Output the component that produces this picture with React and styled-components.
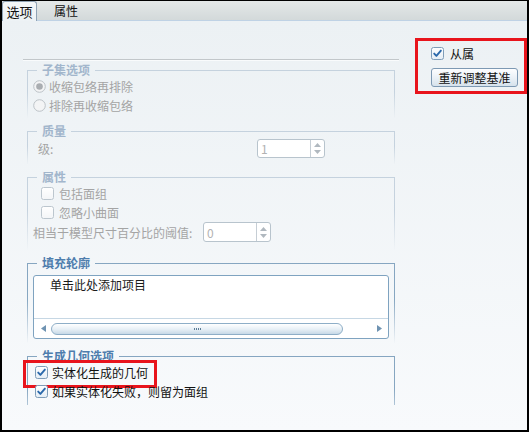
import React from "react";
import styled, { createGlobalStyle } from "styled-components";

const GlobalStyle = createGlobalStyle`
  html, body { margin: 0; padding: 0; background: #fff; }
  body {
    font-family: "Noto Sans CJK SC", "DejaVu Sans", sans-serif;
    font-size: 12px;
    color: #111;
  }
`;

const Frame = styled.div`
  width: 529px;
  height: 432px;
  box-sizing: border-box;
  border: 2px solid #000;
  border-top-width: 1px;
  display: flex;
  flex-direction: column;
  overflow: hidden;
`;

const TabBar = styled.div`
  height: 20px;
  box-sizing: border-box;
  display: flex;
  align-items: flex-end;
  background: linear-gradient(#e4e8e8, #d3d9da);
  border-bottom: 1px solid #bfd2e5;
`;

const Tab = styled.div`
  height: ${(p) => (p.$active ? "20px" : "19px")};
  box-sizing: border-box;
  margin-bottom: ${(p) => (p.$active ? "-1px" : "0")};
  padding: 0 ${(p) => (p.$active ? "3px" : "17px")};
  display: flex;
  align-items: center;
  font-size: ${(p) => (p.$active ? "13px" : "12px")};
  line-height: 1;
  color: #111;
  ${(p) =>
    p.$active &&
    `
    width: 35px;
    justify-content: center;
    background: linear-gradient(#f3f6f8, #edf2f5);
    border: 1px solid #90a3b5;
    border-bottom: none;
    border-radius: 3px 3px 0 0;
  `}
`;

const Content = styled.div`
  flex: 1;
  display: flex;
  align-items: flex-start;
  padding: 17px 0 0 21px;
  background: linear-gradient(#ecf1f4, #f8fafc);
`;

const Panel = styled.div`
  margin-top: 21px;
  width: 376px;
  height: 346px;
  box-sizing: border-box;
  border-top: 1px solid #c2c7ca;
  box-shadow: inset 0 1px 0 #f9fbfc;
  padding: 3px 0 0 4px;
  display: flex;
  flex-direction: column;
  gap: 6px;
  overflow: hidden;
`;

const Group = styled.fieldset`
  margin: 0;
  padding: 0;
  min-width: 0;
  width: 368px;
  height: ${(p) => p.$h}px;
  box-sizing: border-box;
  flex: none;
  border: 1px solid transparent;
  border-bottom: none;
  border-image: linear-gradient(
      to bottom,
      ${(p) => (p.$on ? "#86a6c1" : "#c5d2de")} 0,
      ${(p) => (p.$on ? "#86a6c1" : "#c5d2de")} 45%,
      rgba(255, 255, 255, 0) 100%
    )
    1;
`;

const Legend = styled.legend`
  margin-left: 9px;
  padding: 0 5px;
  font-weight: bold;
  line-height: 14px;
  color: ${(p) => (p.$on ? "#4e7dad" : "#a2b6cc")};
`;

const Row = styled.div`
  position: relative;
  display: flex;
  align-items: center;
  height: ${(p) => p.$h || 19}px;
  padding-left: ${(p) => p.$indent || 0}px;
  gap: ${(p) => p.$gap ?? 4}px;
  color: ${(p) => (p.$off ? "#a4a4a4" : "#111")};
  white-space: nowrap;
`;

const Label = styled.span`
  width: ${(p) => (p.$w ? `${p.$w}px` : "auto")};
  flex: none;
`;

const Highlight = styled.span`
  position: absolute;
  left: -5px;
  top: -3px;
  width: 134px;
  height: 28px;
  border: 3px solid #e8141c;
  box-sizing: border-box;
  pointer-events: none;
`;

const Spin = styled.div`
  width: 68px;
  height: ${(p) => p.$h || 19}px;
  box-sizing: border-box;
  display: flex;
  border: 1px solid #b8c4cd;
  border-radius: 3px;
  background: #fff;
`;

const SpinValue = styled.div`
  flex: 1;
  padding-left: 3px;
  display: flex;
  align-items: center;
  color: #b2b2b2;
`;

const SpinButtons = styled.div`
  width: 13px;
  border-left: 1px solid #c6ced5;
  display: flex;
  flex-direction: column;
  align-items: center;
  justify-content: center;
  gap: 3px;
`;

const Inset = styled.div`
  padding: 5px 5px 0;
`;

const ListBox = styled.div`
  height: 64px;
  box-sizing: border-box;
  border: 1px solid #7fa3c0;
  border-radius: 3px;
  background: #fff;
  display: flex;
  flex-direction: column;
`;

const ListBody = styled.div`
  flex: 1;
  padding: 1px 0 0 16px;
  line-height: 16px;
  color: #1a1a1a;
`;

const HScroll = styled.div`
  height: 20px;
  box-sizing: border-box;
  border-top: 1px solid #c6d7e4;
  display: flex;
  align-items: center;
  padding: 0 6px 0 7px;
`;

const Thumb = styled.div`
  margin-left: 5px;
  width: 292px;
  height: 12px;
  box-sizing: border-box;
  border: 1px solid #8eaec7;
  border-radius: 6px;
  background: linear-gradient(#ffffff, #e8f0f6 50%, #c7d9e7);
  display: flex;
  align-items: center;
  justify-content: center;
`;

const Grip = styled.span`
  width: 7px;
  height: 2px;
  background: repeating-linear-gradient(to right, #5d7d97 0 1px, transparent 1px 2px);
`;

const Spacer = styled.div`
  flex: 1;
`;

const Side = styled.div`
  margin-left: 16px;
  width: 112px;
  height: 56px;
  box-sizing: border-box;
  border: 3px solid #e8141c;
  padding: 5px 0 0 13px;
  display: flex;
  flex-direction: column;
  gap: 8px;
`;

const Button = styled.button`
  width: 87px;
  height: 19px;
  padding: 0;
  box-sizing: border-box;
  border: 1px solid #7d99b3;
  border-radius: 3px;
  background: linear-gradient(#fdfeff, #e9f0f6 55%, #d6e2ec);
  font-family: inherit;
  font-size: 12px;
  line-height: 1;
  color: #111;
`;

const Box = ({ on = true, checked }) => (
  <svg width="13" height="13" viewBox="0 0 13 13" style={{ flex: "none" }}>
    <defs>
      <linearGradient id={`cb${on ? 1 : 0}`} x1="0" y1="0" x2="0" y2="1">
        <stop offset="0" stopColor="#ffffff" />
        <stop offset="1" stopColor={on ? "#e4edf5" : "#f3f5f7"} />
      </linearGradient>
    </defs>
    <rect x="0.5" y="0.5" width="12" height="12" rx="2" fill={`url(#cb${on ? 1 : 0})`} stroke={on ? "#7f9db8" : "#bcc6ce"} />
    {checked && (
      <path d="M3.2 6.6 L5.4 8.9 L9.9 3.6" fill="none" stroke="#2b69ab" strokeWidth="1.9" strokeLinecap="round" strokeLinejoin="round" />
    )}
  </svg>
);

const Radio = ({ checked }) => (
  <svg width="13" height="13" viewBox="0 0 13 13" style={{ flex: "none" }}>
    <circle cx="6.5" cy="6.5" r="5.8" fill="#f3f4f5" stroke="#bcc2c7" />
    {checked && <circle cx="6.5" cy="6.5" r="3.3" fill="#a9adb1" />}
  </svg>
);

const Arrow = ({ dir }) => (
  <svg width="5" height="7" viewBox="0 0 5 7" style={{ flex: "none" }}>
    <path d={dir === "left" ? "M5 0 L0 3.5 L5 7 Z" : "M0 0 L5 3.5 L0 7 Z"} fill="#6f93b2" />
  </svg>
);

const Tri = ({ up }) => (
  <svg width="7" height="4" viewBox="0 0 7 4">
    <path d={up ? "M0 4 L3.5 0 L7 4 Z" : "M0 0 L3.5 4 L7 0 Z"} fill="#b0b8bf" />
  </svg>
);

const SpinBox = ({ value, h }) => (
  <Spin $h={h}>
    <SpinValue>{value}</SpinValue>
    <SpinButtons>
      <Tri up />
      <Tri />
    </SpinButtons>
  </Spin>
);

export default function App() {
  return (
    <>
      <GlobalStyle />
      <Frame>
        <TabBar>
          <Tab $active>选项</Tab>
          <Tab>属性</Tab>
        </TabBar>
        <Content>
          <Panel>
            <Group $h={55}>
              <Legend>子集选项</Legend>
              <Row $off $indent={5} $gap={3}>
                <Radio checked />
                收缩包络再排除
              </Row>
              <Row $off $indent={5} $gap={3}>
                <Radio />
                排除再收缩包络
              </Row>
            </Group>

            <Group $h={40}>
              <Legend>质量</Legend>
              <Row $off $indent={10} $h={21} $gap={0}>
                <Label $w={219}>级:</Label>
                <SpinBox value="1" />
              </Row>
            </Group>

            <Group $h={80}>
              <Legend>属性</Legend>
              <Row $off $indent={13} $gap={5}>
                <Box on={false} />
                包括面组
              </Row>
              <Row $off $indent={13} $gap={5} $h={18}>
                <Box on={false} />
                忽略小曲面
              </Row>
              <Row $off $indent={5} $h={22} $gap={6}>
                <Label $w={164}>相当于模型尺寸百分比的阈值:</Label>
                <SpinBox value="0" h={20} />
              </Row>
            </Group>

            <Group $h={87} $on>
              <Legend $on>填充轮廓</Legend>
              <Inset>
                <ListBox>
                  <ListBody>单击此处添加项目</ListBody>
                  <HScroll>
                    <Arrow dir="left" />
                    <Thumb>
                      <Grip />
                    </Thumb>
                    <Spacer />
                    <Arrow dir="right" />
                  </HScroll>
                </ListBox>
              </Inset>
            </Group>

            <Group $h={80} $on>
              <Legend $on>生成几何选项</Legend>
              <Row $indent={7} $gap={4}>
                <Box checked />
                实体化生成的几何
                <Highlight />
              </Row>
              <Row $indent={7} $gap={4}>
                <Box checked />
                如果实体化失败，则留为面组
              </Row>
            </Group>
          </Panel>

          <Side>
            <Row $h={14} $gap={6}>
              <Box checked />
              从属
            </Row>
            <Button>重新调整基准</Button>
          </Side>
        </Content>
      </Frame>
    </>
  );
}
